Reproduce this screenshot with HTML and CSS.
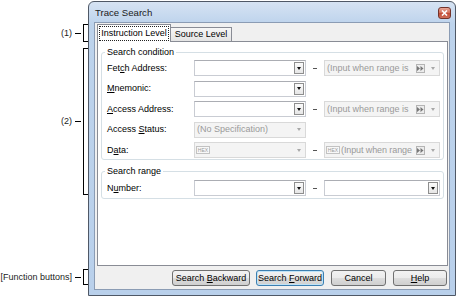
FILE: index.html
```html
<!DOCTYPE html>
<html lang="en">

<head>
    <meta charset="UTF-8">
    <meta name="viewport" content="width=device-width, initial-scale=1.0">
    <title>Trace Search</title>
    <link rel="stylesheet" href="styles.css">
</head>

<body>
    <div class="page">
        <!-- callouts on the left -->
        <div class="notes">
            <div class="note note-tabs">
                <span class="note-text">(1)</span><span class="dash"></span><span class="brace"></span>
            </div>
            <div class="note note-panel">
                <span class="note-text">(2)</span><span class="dash"></span><span class="brace"></span>
            </div>
            <div class="note note-buttons">
                <span class="note-text">[Function buttons]</span><span class="dash"></span><span class="brace"></span>
            </div>
        </div>

        <div class="window">
            <div class="titlebar">
                <span class="title">Trace Search</span>
                <span class="close">
                    <svg width="7" height="6" viewBox="0 0 7 6">
                        <path d="M1 0.5 L6 5.5 M6 0.5 L1 5.5" stroke="#fff" stroke-width="1.6" />
                    </svg>
                </span>
            </div>

            <div class="client">
                <ul class="tabs">
                    <li class="tab active"><span class="focus">Instruction Level</span></li>
                    <li class="tab">Source Level</li>
                </ul>

                <div class="panel">
                    <fieldset class="group cond">
                        <legend>Search condition</legend>
                        <div class="row">
                            <label>Fet<u>c</u>h Address:</label>
                            <div class="combo"><span class="val"></span><span class="drop"><span class="arrow"></span></span></div>
                            <span class="range-dash"></span>
                            <div class="combo disabled">
                                <span class="val">(Input when range is</span>
                                <span class="skip"><svg width="7" height="5" viewBox="0 0 7 5"><path d="M0 0 L3 2.5 L0 5Z M3.5 0 L6.5 2.5 L3.5 5Z" fill="#777" /></svg></span>
                                <span class="drop"><span class="arrow"></span></span>
                            </div>
                        </div>
                        <div class="row">
                            <label><u>M</u>nemonic:</label>
                            <div class="combo"><span class="val"></span><span class="drop"><span class="arrow"></span></span></div>
                        </div>
                        <div class="row">
                            <label><u>A</u>ccess Address:</label>
                            <div class="combo"><span class="val"></span><span class="drop"><span class="arrow"></span></span></div>
                            <span class="range-dash"></span>
                            <div class="combo disabled">
                                <span class="val">(Input when range is</span>
                                <span class="skip"><svg width="7" height="5" viewBox="0 0 7 5"><path d="M0 0 L3 2.5 L0 5Z M3.5 0 L6.5 2.5 L3.5 5Z" fill="#777" /></svg></span>
                                <span class="drop"><span class="arrow"></span></span>
                            </div>
                        </div>
                        <div class="row">
                            <label>Access <u>S</u>tatus:</label>
                            <div class="combo disabled"><span class="val">(No Specification)</span><span class="drop"><span class="arrow"></span></span></div>
                        </div>
                        <div class="row">
                            <label>D<u>a</u>ta:</label>
                            <div class="combo disabled">
                                <span class="hex">HEX</span><span class="val"></span>
                                <span class="drop"><span class="arrow"></span></span>
                            </div>
                            <span class="range-dash"></span>
                            <div class="combo disabled">
                                <span class="hex">HEX</span><span class="val tight">(Input when range</span>
                                <span class="skip"><svg width="7" height="5" viewBox="0 0 7 5"><path d="M0 0 L3 2.5 L0 5Z M3.5 0 L6.5 2.5 L3.5 5Z" fill="#777" /></svg></span>
                                <span class="drop"><span class="arrow"></span></span>
                            </div>
                        </div>
                    </fieldset>

                    <fieldset class="group range">
                        <legend>Search range</legend>
                        <div class="row">
                            <label>N<u>u</u>mber:</label>
                            <div class="combo"><span class="val"></span><span class="drop"><span class="arrow"></span></span></div>
                            <span class="range-dash"></span>
                            <div class="combo wide"><span class="val"></span><span class="drop"><span class="arrow"></span></span></div>
                        </div>
                    </fieldset>
                </div>

                <div class="buttons">
                    <button class="btn btn-back">Search <u>B</u>ackward</button>
                    <button class="btn btn-fwd focused">Search <u>F</u>orward</button>
                    <button class="btn btn-cancel">Cancel</button>
                    <button class="btn btn-help"><u>H</u>elp</button>
                </div>
            </div>
        </div>
    </div>
</body>

</html>
```

FILE: styles.css
```css
* {
    margin: 0;
    padding: 0;
    box-sizing: border-box;
}

ul {
    list-style: none;
}

body {
    font-family: "Liberation Sans", Arial, sans-serif;
    font-size: 9px;
    color: #000;
    background: #fff;
}

u {
    text-decoration: underline;
    text-underline-offset: 1px;
}

.page {
    display: flex;
    width: 473px;
    height: 299px;
}

/* callouts */

.notes {
    width: 88px;
    flex-shrink: 0;
    display: flex;
    flex-direction: column;
    padding-top: 24px;
}

.note {
    display: flex;
    align-items: center;
    justify-content: flex-end;
}

.note-tabs {
    height: 18px;
}

.note-panel {
    height: 147px;
    margin-top: 6px;
}

.note-buttons {
    height: 16px;
    margin-top: 74px;
}

.note-text {
    margin-right: 3px;
    line-height: 11px;
    color: #1c1c1c;
}

.dash {
    width: 6px;
    height: 1px;
    background: #000;
    margin-right: 2px;
}

.brace {
    width: 5px;
    align-self: stretch;
    border: 1px solid #000;
    border-right: 0;
}

/* window frame */

.window {
    width: 368px;
    height: 295px;
    margin-top: 1px;
    border: 1px solid #4f5866;
    border-radius: 6px 6px 0 0;
    background: linear-gradient(#d6e3f3, #bdd3ec 22px, #b9d0eb);
    display: flex;
    flex-direction: column;
    padding: 0 5px 5px;
}

.titlebar {
    height: 20px;
    display: flex;
    align-items: center;
    justify-content: space-between;
    padding-left: 1px;
}

.title {
    font-size: 9.6px;
    color: #1a1a1a;
}

.close {
    width: 13px;
    height: 12px;
    margin-right: -1px;
    margin-top: 2px;
    border: 1px solid #73332b;
    border-radius: 3px;
    background: linear-gradient(#e9a899, #cf6a55 50%, #c24a35 51%, #d0705a);
    display: flex;
    align-items: center;
    justify-content: center;
}

.close svg {
    display: block;
}

.client {
    flex: 1;
    border: 1px solid #8b9cb4;
    background: #f0f0f0;
    display: flex;
    flex-direction: column;
    padding: 0 1px 3px 2px;
}

/* tabs */

.tabs {
    height: 18px;
    display: flex;
    align-items: flex-end;
}

.tab {
    height: 14px;
    width: 61px;
    border: 1px solid #898c95;
    border-bottom: 0;
    border-left: 0;
    background: linear-gradient(#f7f7f7, #e4e4e4);
    text-align: center;
    line-height: 13px;
}

.tab.active {
    width: 74px;
    height: 18px;
    margin-bottom: -1px;
    border-left: 1px solid #898c95;
    background: #fff;
    position: relative;
    z-index: 1;
    padding: 1px 1px 1px;
}

.tab .focus {
    display: block;
    height: 15px;
    line-height: 13px;
    border: 1px dotted #222;
}

/* tab page */

.panel {
    flex: 1;
    border: 1px solid #898c95;
    background: #fff;
    padding: 4.5px 3px 0 3px;
}

.group {
    border: 1px solid #d5dfe5;
    border-radius: 3px;
    padding: 2.5px 2px 1px 5px;
    min-inline-size: auto;
    display: flex;
    flex-direction: column;
    gap: 4.5px;
}

.group legend {
    padding: 0 2px;
    margin-left: -2px;
    line-height: 11px;
}

.group.range {
    margin-top: 6px;
    padding-top: 3px;
    padding-bottom: 2px;
}

.row {
    display: grid;
    grid-template-columns: 87px 112px 18px 116px;
    height: 16px;
    align-items: center;
}

.row label {
    line-height: 11px;
}

.range-dash {
    justify-self: center;
    width: 4px;
    height: 1px;
    background: #555;
    margin-top: 1px;
}

/* combo boxes */

.combo {
    height: 16px;
    border: 1px solid #c9ccd3;
    border-top-color: #abadb3;
    background: #fff;
    display: flex;
    align-items: center;
    overflow: hidden;
}

.combo .val {
    flex: 1;
    white-space: nowrap;
    overflow: hidden;
    padding-left: 2px;
    line-height: 11px;
}

.combo .val.tight {
    padding-left: 1px;
    letter-spacing: -0.1px;
}

.combo .drop {
    width: 10px;
    height: 12px;
    margin-right: 1px;
    border: 1px solid #8e8e8e;
    background: linear-gradient(#fbfbfb, #e6e6e6);
    display: flex;
    align-items: center;
    justify-content: center;
}

.arrow {
    width: 0;
    height: 0;
    border-left: 2.5px solid transparent;
    border-right: 2.5px solid transparent;
    border-top: 3px solid #111;
}

.combo.disabled {
    border-color: #d9d9d9;
    background: #f4f4f4;
    color: #9a9a9a;
}

.combo.disabled .drop {
    border: 0;
    background: none;
    width: 10px;
}

.combo.disabled .arrow {
    border-top-color: #a8a8a8;
}

.combo .skip {
    flex-shrink: 0;
    width: 9px;
    height: 9px;
    margin-right: 3px;
    border: 1px solid #b4b4b4;
    background: #ececec;
    display: flex;
    align-items: center;
    justify-content: center;
}

.combo .skip svg {
    display: block;
}

.combo .hex {
    flex-shrink: 0;
    width: 14px;
    height: 8px;
    margin-left: 1px;
    border: 1px solid #c2c2c2;
    font-size: 5px;
    line-height: 6px;
    text-align: center;
    color: #9a9a9a;
    background: #f8f8f8;
}

/* buttons */

.buttons {
    height: 16px;
    margin-top: 4px;
    padding-right: 1px;
    display: flex;
    justify-content: flex-end;
    gap: 7px;
}

.btn {
    height: 16px;
    border: 1px solid #707070;
    border-radius: 3px;
    background: linear-gradient(#f2f2f2, #ebebeb 50%, #dddddd 51%, #cfcfcf);
    font-family: inherit;
    font-size: 9px;
    color: #000;
    line-height: 12px;
}

.btn-back {
    width: 78px;
    margin-right: -1px;
}

.btn-fwd {
    width: 68px;
}

.btn-cancel {
    width: 55px;
}

.btn-help {
    width: 54px;
}

.btn.focused {
    border-color: #3c7fb1;
    box-shadow: inset 0 0 0 1px #bfe3f7;
}
```
